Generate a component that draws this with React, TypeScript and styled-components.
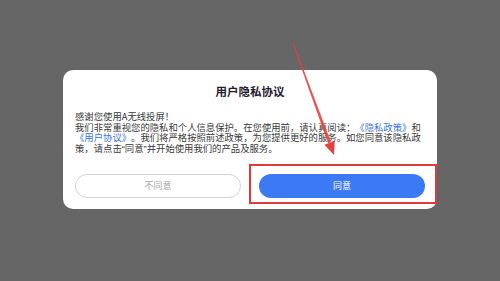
import React from "react";
import styled, { createGlobalStyle } from "styled-components";

const Global = createGlobalStyle`
  html, body { margin: 0; padding: 0; }
  body {
    width: 500px; height: 281px; overflow: hidden;
    background: #666666;
    font-family: "Noto Sans CJK SC", "Noto Sans", sans-serif;
  }
`;

const Screen = styled.div`
  position: relative;
  width: 500px;
  height: 281px;
  display: flex;
  align-items: center;
  justify-content: center;
  padding-bottom: 3px;
  box-sizing: border-box;
`;

const Dialog = styled.div`
  width: 374px;
  box-sizing: border-box;
  background: #ffffff;
  border-radius: 10px;
  padding: 13px 12px 11px;
  display: flex;
  flex-direction: column;
`;

const Title = styled.h1`
  margin: 0;
  font-size: 11.5px;
  line-height: 16px;
  font-weight: 700;
  color: #1f2130;
  text-align: center;
`;

const Body = styled.p`
  margin: 12.75px 0 0;
  font-size: 9.35px;
  line-height: 10.5px;
  color: #3a3a3a;
  text-align: left;
  text-spacing-trim: space-all;
`;

const Link = styled.span`
  color: #3b74e6;
`;

const Quote = styled.span`
  font-family: "Liberation Sans", sans-serif;
`;

const Actions = styled.div`
  display: grid;
  grid-template-columns: 1fr 1fr;
  gap: 18px;
  margin-top: 19.25px;
`;

const Button = styled.button<{ $primary?: boolean }>`
  height: 24px;
  border-radius: 12px;
  font-family: inherit;
  font-size: 9px;
  padding: 0;
  cursor: pointer;
  border: ${(p) => (p.$primary ? "none" : "1px solid #d2d2d2")};
  background: ${(p) => (p.$primary ? "#3c79f4" : "#ffffff")};
  color: ${(p) => (p.$primary ? "#ffffff" : "#a9a9a9")};
`;

const Highlight = styled.div`
  position: absolute;
  left: 249px;
  top: 164px;
  width: 188px;
  height: 40px;
  box-sizing: border-box;
  border: 2px solid #e2393b;
  pointer-events: none;
`;

const ArrowLayer = styled.svg`
  position: absolute;
  left: 0;
  top: 0;
  pointer-events: none;
`;

const Arrow = () => {
  const sx = 293, sy = 43;
  const tx = 334, ty = 155;
  const dx = tx - sx, dy = ty - sy;
  const len = Math.hypot(dx, dy);
  const ux = dx / len, uy = dy / len;
  const px = uy, py = -ux;
  const headLen = 13, headW = 5.5;
  const bx = tx - ux * headLen, by = ty - uy * headLen;
  const w0 = 0.45, w1 = 1.6;
  const shaft = [
    [sx + px * w0, sy + py * w0],
    [bx + px * w1, by + py * w1],
    [bx - px * w1, by - py * w1],
    [sx - px * w0, sy - py * w0],
  ]
    .map((p) => p.join(","))
    .join(" ");
  const head = [
    [tx, ty],
    [bx + px * headW, by + py * headW],
    [bx - px * headW, by - py * headW],
  ]
    .map((p) => p.join(","))
    .join(" ");
  return (
    <ArrowLayer width={500} height={281} viewBox="0 0 500 281">
      <polygon points={shaft} fill="#e8403c" opacity={0.9} />
      <polygon points={head} fill="#e8403c" />
    </ArrowLayer>
  );
};

export default function App() {
  return (
    <>
      <Global />
      <Screen>
        <Dialog>
          <Title>用户隐私协议</Title>
          <Body>
            感谢您使用A无线投屏！
            <br />
            我们非常重视您的隐私和个人信息保护。在您使用前，请认真阅读：<Link>《隐私政策》</Link>和<Link>《用户协议》</Link>。我们将严格按照前述政策，为您提供更好的服务。如您同意该隐私政策，请点击<Quote>“</Quote>同意<Quote>”</Quote>并开始使用我们的产品及服务。
          </Body>
          <Actions>
            <Button>不同意</Button>
            <Button $primary>同意</Button>
          </Actions>
        </Dialog>
        <Highlight />
        <Arrow />
      </Screen>
    </>
  );
}
